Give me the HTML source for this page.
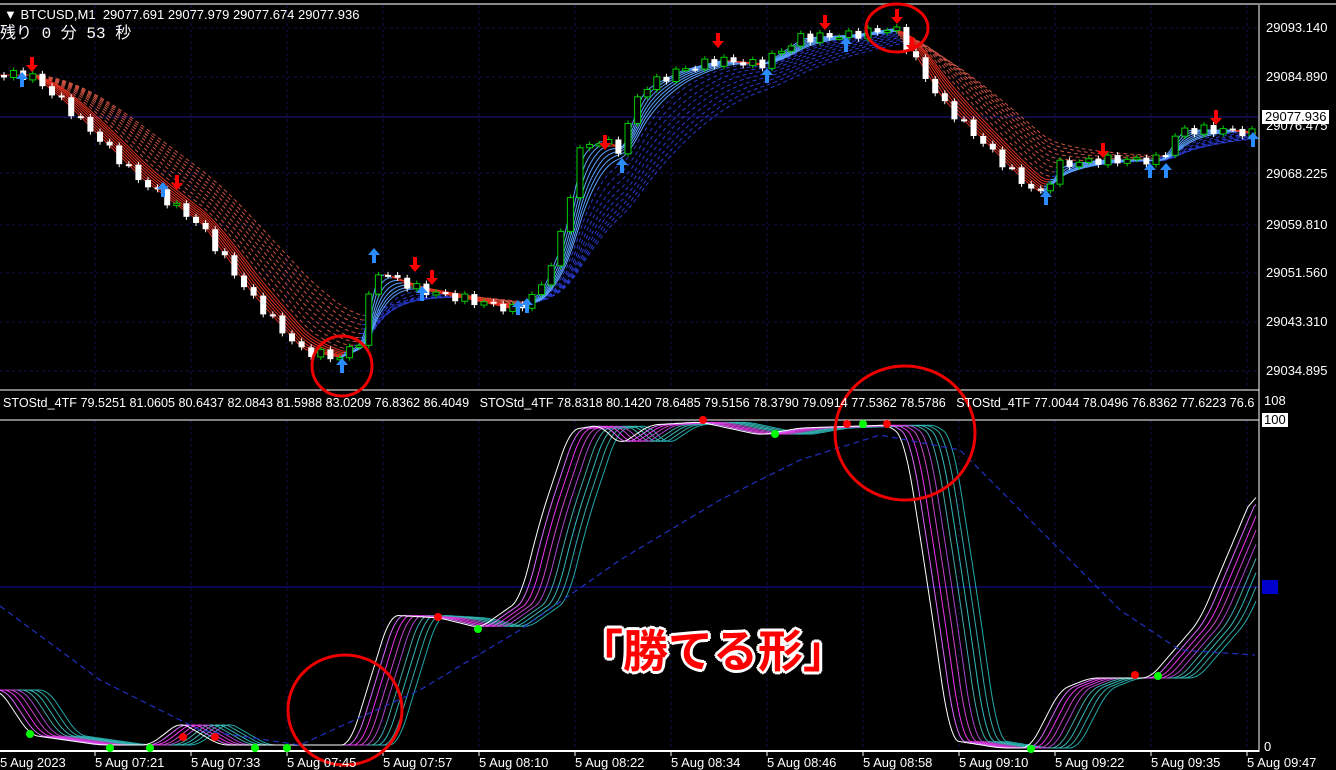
<!DOCTYPE html>
<html><head><meta charset="utf-8"><style>
body{margin:0;background:#000;width:1336px;height:767px;overflow:hidden;font-family:"Liberation Sans","Noto Sans CJK JP",sans-serif;}
svg{position:absolute;left:0;top:0}
.t{position:absolute;color:#fff;font-size:13px;white-space:nowrap;line-height:14px}
.ax{position:absolute;color:#fff;font-size:13px;left:1266px;line-height:14px}
</style></head><body>
<svg id="s" width="1336" height="767"></svg>
<div class="t" style="left:4px;top:8px">▼ BTCUSD,M1&nbsp; 29077.691 29077.979 29077.674 29077.936</div>
<div class="t" style="left:0;top:25px;font-size:16px;line-height:18px;font-family:'Liberation Mono','Noto Sans CJK JP',monospace">残り 0 分 53 秒</div>
<div class="ax" style="top:21px">29093.140</div>
<div class="ax" style="top:70px">29084.890</div>
<div class="ax" style="top:119px">29076.475</div>
<div class="ax" style="top:110px;left:1262px;background:#fff;color:#000;padding:0 3px">29077.936</div>
<div class="ax" style="top:167px">29068.225</div>
<div class="ax" style="top:218px">29059.810</div>
<div class="ax" style="top:266px">29051.560</div>
<div class="ax" style="top:315px">29043.310</div>
<div class="ax" style="top:364px">29034.895</div>
<div class="ax" style="top:394px;left:1264px">108</div>
<div class="ax" style="top:413px;left:1262px;background:#fff;color:#000;padding:0 2px">100</div>
<div class="ax" style="top:580px;left:1262px;background:#00c;color:#00c;width:16px">50</div>
<div class="ax" style="top:740px;left:1264px">0</div>
<div class="t" style="left:3px;top:396px;font-size:12.6px;width:1255px;overflow:hidden">STOStd_4TF 79.5251 81.0605 80.6437 82.0843 81.5988 83.0209 76.8362 86.4049&nbsp;&nbsp; STOStd_4TF 78.8318 80.1420 78.6485 79.5156 78.3790 79.0914 77.5362 78.5786&nbsp;&nbsp; STOStd_4TF 77.0044 78.0496 76.8362 77.6223 76.6</div>
<div id="bx"></div>
<div style="position:absolute;left:578px;top:620px;font-size:45px;font-weight:bold;color:#f00;font-family:'Noto Sans CJK JP',sans-serif;line-height:56px;text-shadow:2px 2px 0 #fff,-2px -2px 0 #fff,2px -2px 0 #fff,-2px 2px 0 #fff,0 3px 0 #fff,0 -3px 0 #fff,3px 0 0 #fff,-3px 0 0 #fff">「勝てる形」</div>
<script>
const s=document.getElementById('s');let h='';
function L(x1,y1,x2,y2,c,w,d){h+=`<line x1="${x1}" y1="${y1}" x2="${x2}" y2="${y2}" stroke="${c}" stroke-width="${w||1}" ${d?'stroke-dasharray="'+d+'"':''}/>`}
for(let x=95;x<1260;x+=96){L(x,5,x,390,'#12124a',1,'3 3');L(x,420,x,750,'#12124a',1,'3 3')}
[28,77,173,225,273,322,371].forEach(y=>L(0,y,1258,y,'#12124a',1,'3 3'));
L(0,117,1258,117,'#1a1a88');
L(0,587,1258,587,'#1010aa');
L(0,4,1336,4,'#888',2);L(1259,5,1259,752,'#fff');L(0,390,1259,390,'#fff');L(0,420,1259,420,'#fff');L(0,751,1259,751,'#fff',2);
for(let x=95;x<1260;x+=96)L(x,751,x,756,'#fff');
function interp(pts,x){for(let i=1;i<pts.length;i++){if(x<=pts[i][0]){const a=pts[i-1],b=pts[i];return a[1]+(b[1]-a[1])*(x-a[0])/(b[0]-a[0])}}return pts[pts.length-1][1]}
const P=[[0,75],[30,75],[60,100],[100,140],[140,180],[200,225],[250,295],[300,350],[340,358],[360,340],[375,270],[420,290],[460,298],[515,310],[540,290],[560,240],[580,150],[600,140],[620,150],[640,90],[680,70],[720,60],[760,65],[800,38],[850,35],[895,28],[915,60],[940,100],[980,140],[1020,180],[1040,195],[1060,165],[1100,160],[1160,160],[1180,130],[1230,130],[1258,135]];
function ema(pts,n){let out=[],v=interp(pts,0);for(let x=0;x<=1256;x+=1){const k=2/(n+1);v=v+(interp(pts,x)-v)*k;if(x%2==0)out.push([x,v])}return out}
function path(a,c,w,d,op){h+=`<path d="M${a.map(p=>p[0]+','+p[1].toFixed(1)).join('L')}" fill="none" stroke="${c}" stroke-width="${w}" ${d?'stroke-dasharray="'+d+'"':''} opacity="${op||1}"/>`}
for(let n=150;n>=50;n-=12){const e=ema(P,n);
 let seg=[],col=null;for(let i=0;i<e.length;i++){const c=interp(P,e[i][0])<e[i][1]?'#2838c8':'#c85040';if(c!==col&&seg.length){path(seg,col,1,'4 3');seg=[seg[seg.length-1]]}col=c;seg.push(e[i])}path(seg,col,1,'4 3')}
for(let n=45;n>=5;n-=6){const e=ema(P,n);
 let seg=[],col=null;for(let i=0;i<e.length;i++){const c=interp(P,e[i][0])<e[i][1]?'#5aa0ff':'#e03020';if(c!==col&&seg.length){path(seg,col,1);seg=[seg[seg.length-1]]}col=c;seg.push(e[i])}path(seg,col,1)}
let prev=interp(P,0);
for(let x=4;x<1256;x+=9.6){const y=interp(P,x)+Math.sin(x*1.7)*5;const o=prev,c=y;prev=y;const t=Math.min(o,c),b=Math.max(o,c),hh=Math.max(b-t,2);
 L(x,t-3,x,b+3,c>o?'#fff':'#0c0');
 if(c>o)h+=`<rect x="${x-3}" y="${t}" width="6" height="${hh}" fill="#fff"/>`;else h+=`<rect x="${x-3}" y="${t}" width="6" height="${hh}" fill="#000" stroke="#0c0"/>`}
function arr(x,y,up){const c=up?'#2a8cff':'#f00';if(up)h+=`<path d="M${x},${y} l-6,7 h4 v8 h4 v-8 h4z" fill="${c}"/>`;else h+=`<path d="M${x},${y} l-6,-7 h4 v-8 h4 v8 h4z" fill="${c}"/>`}
[[22,72],[163,182],[342,358],[374,248],[422,286],[518,300],[527,298],[622,158],[767,68],[846,37],[1046,190],[1150,163],[1166,163],[1253,132]].forEach(a=>arr(a[0],a[1],1));
[[32,72],[177,190],[415,272],[432,285],[605,150],[718,48],[825,30],[897,24],[912,52],[1103,158],[1216,125]].forEach(a=>arr(a[0],a[1],0));
const S=[[0,690],[30,735],[100,745],[150,745],[180,722],[220,745],[350,745],[370,680],[390,615],[440,618],[480,628],[520,600],[540,520],[570,430],[600,425],[620,445],[650,425],[700,422],[760,435],[800,428],[890,425],[905,440],[930,600],[950,740],[1000,748],[1030,748],[1060,690],[1090,678],[1150,678],[1200,620],[1255,490]];
let raw=[];for(let x=-80;x<=1256;x+=2)raw.push([x,interp(S,Math.max(0,x))]);
let sm=raw.map((p,i)=>{let a=0,c=0;for(let j=-4;j<=4;j++){const q=raw[i+j];if(q){a+=q[1];c++}}return [p[0],a/c]});
function lagged(d){return sm.map(p=>[p[0]+d,p[1]]).filter(p=>p[0]>=0&&p[0]<=1256)}
const cols=['#2aa','#3aa','#3bb','#4aa','#a4c','#c4c','#e3e','#d6f','#fff'];
for(let i=8;i>=0;i--){path(lagged(i*6).map(p=>[p[0],Math.min(p[1],749)]),cols[8-i],1)}
path([[0,606],[100,680],[200,730],[300,745],[420,690],[520,630],[620,560],[720,500],[800,460],[880,435],[960,450],[1040,530],[1120,610],[1180,650],[1255,655]],'#2030c0',1.2,'6 4');
[[30,734,'#0f0'],[110,748,'#0f0'],[150,748,'#0f0'],[183,737,'#f00'],[215,737,'#f00'],[255,748,'#0f0'],[287,748,'#0f0'],[438,617,'#f00'],[478,629,'#0f0'],[703,420,'#f00'],[775,434,'#0f0'],[847,424,'#f00'],[863,424,'#0f0'],[887,424,'#f00'],[1031,749,'#0f0'],[1135,675,'#f00'],[1158,676,'#0f0']].forEach(d=>h+=`<circle cx="${d[0]}" cy="${d[1]}" r="4" fill="${d[2]}"/>`);
h+=`<ellipse cx="342" cy="366" rx="30" ry="30" fill="none" stroke="#e00" stroke-width="3"/>`;
h+=`<ellipse cx="897" cy="28" rx="31" ry="24" fill="none" stroke="#e00" stroke-width="3"/>`;
h+=`<ellipse cx="345" cy="710" rx="57" ry="55" fill="none" stroke="#e00" stroke-width="3"/>`;
h+=`<ellipse cx="905" cy="433" rx="70" ry="67" fill="none" stroke="#e00" stroke-width="3"/>`;
s.innerHTML=h;
const lab=['5 Aug 2023','5 Aug 07:21','5 Aug 07:33','5 Aug 07:45','5 Aug 07:57','5 Aug 08:10','5 Aug 08:22','5 Aug 08:34','5 Aug 08:46','5 Aug 08:58','5 Aug 09:10','5 Aug 09:22','5 Aug 09:35','5 Aug 09:47'];
let b='';lab.forEach((t,i)=>b+=`<div class="t" style="left:${i?i*96-1:0}px;top:756px">${t}</div>`);
document.getElementById('bx').innerHTML=b;
</script>
</body></html>
